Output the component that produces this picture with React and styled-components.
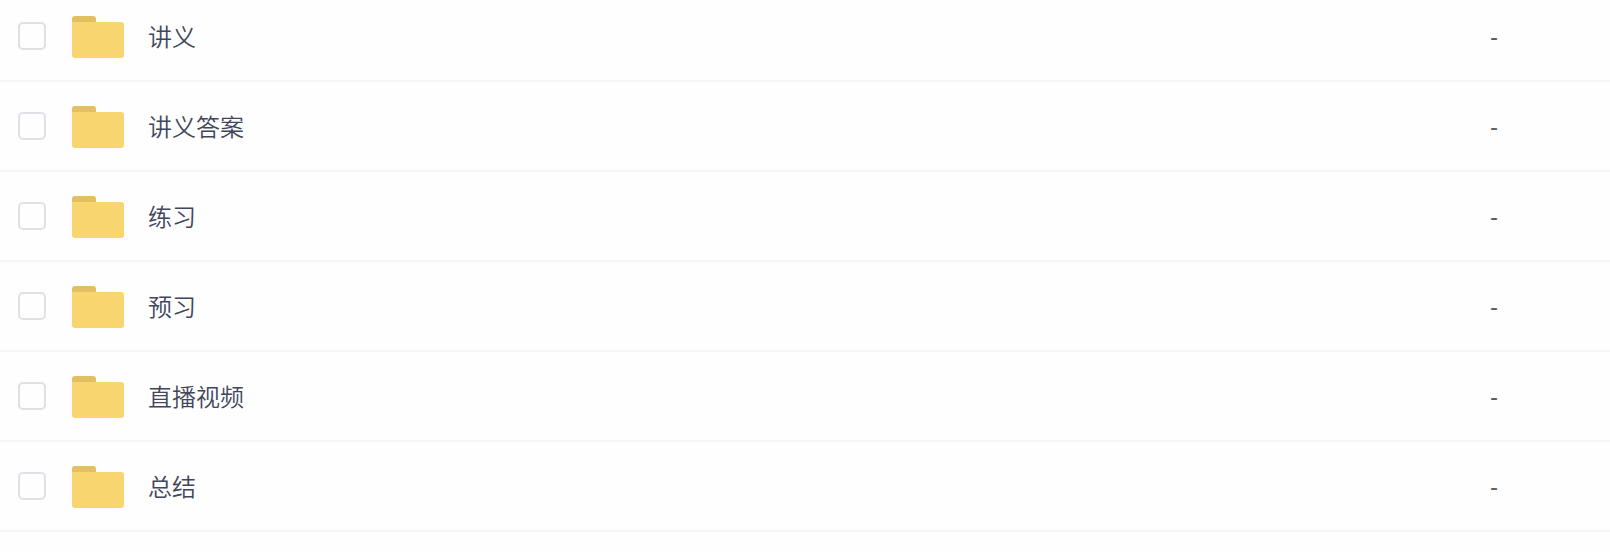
import React from 'react';
import styled, { createGlobalStyle } from 'styled-components';

const GlobalStyle = createGlobalStyle`
  body {
    margin: 0;
    background: #fefefe;
    overflow: hidden;
  }
`;

const List = styled.ul`
  list-style: none;
  margin: 0;
  padding: 0;
  font-family: 'Noto Sans CJK SC', sans-serif;
  color: #41465c;
`;

const Row = styled.li`
  display: flex;
  align-items: center;
  box-sizing: border-box;
  height: ${props => (props.$first ? 82 : 90)}px;
  padding: ${props => (props.$first ? 0 : 8)}px 0 8px 18px;
  border-bottom: 2px solid #f4f5f9;
`;

const Checkbox = styled.span`
  box-sizing: border-box;
  width: 28px;
  height: 28px;
  border: 2px solid #e0e1e6;
  border-radius: 5px;
`;

const Folder = styled.svg`
  width: 52px;
  height: 42px;
  margin: 1px 0 0 26px;
`;

const Name = styled.span`
  flex: 1;
  margin-left: 24px;
  font-size: 24px;
  font-weight: 350;
  line-height: 36px;
`;

const Size = styled.span`
  width: 120px;
  padding-top: 2px;
  color: #5c5c62;
  font-family: 'Liberation Sans', sans-serif;
  font-size: 24px;
  line-height: 36px;
`;

const FolderIcon = () =>
  <Folder viewBox="0 0 52 42">
    <path d="M0 10V3a3 3 0 0 1 3-3h18a3 3 0 0 1 3 3v7z" fill="#e2c062" />
    <path
      d="M0 6h49a3 3 0 0 1 3 3v30a3 3 0 0 1-3 3H3a3 3 0 0 1-3-3z"
      fill="#f9d56f"
    />
  </Folder>;

const folders = ['讲义', '讲义答案', '练习', '预习', '直播视频', '总结'];

const App = () =>
  <List>
    <GlobalStyle />
    {folders.map((name, index) =>
      <Row key={name} $first={index === 0}>
        <Checkbox />
        <FolderIcon />
        <Name>{name}</Name>
        <Size>-</Size>
      </Row>
    )}
  </List>;

export default App;
